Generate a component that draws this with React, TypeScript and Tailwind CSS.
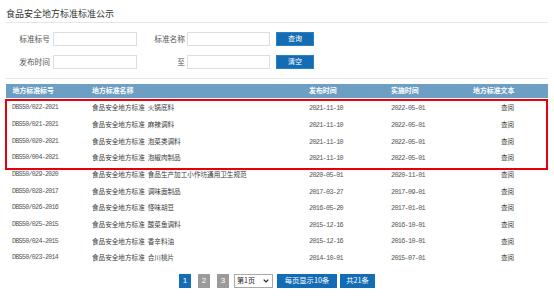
import React, { FC } from "react";

const cjk = "font-['Noto_Sans_CJK_SC',sans-serif]";
const mono = "font-['Liberation_Mono',monospace] tracking-[-0.1em] text-[#555]";

const rows = [
  ["DBS50/022-2021", "火锅底料", "2021-11-10", "2022-05-01"],
  ["DBS50/021-2021", "麻辣调料", "2021-11-10", "2022-05-01"],
  ["DBS50/020-2021", "泡菜类调料", "2021-11-10", "2022-05-01"],
  ["DBS50/004-2021", "泡椒肉制品", "2021-11-10", "2022-05-01"],
  ["DBS50/029-2020", "食品生产加工小作坊通用卫生规范", "2020-05-01", "2020-11-01"],
  ["DBS50/028-2017", "调味面制品", "2017-03-27", "2017-09-01"],
  ["DBS50/026-2016", "怪味胡豆", "2016-05-20", "2017-01-01"],
  ["DBS50/025-2015", "酸菜鱼调料", "2015-12-16", "2016-10-01"],
  ["DBS50/024-2015", "香辛料油", "2015-12-16", "2016-10-01"],
  ["DBS50/023-2014", "合川桃片", "2014-10-01", "2015-07-01"],
];

const Row: FC<{ r: string[] }> = ({ r }) => (
  <div className="flex h-[16.67px] items-center text-[#3a3a3a]">
    <div className={`w-[86px] pl-[6px] text-[6.6px] ${mono}`}>{r[0]}</div>
    <div className={`w-[217px] text-[6.6px] whitespace-nowrap ${cjk}`}>
      食品安全地方标准<span className="ml-[3px]">{r[1]}</span>
    </div>
    <div className={`w-[82px] text-[6.8px] ${mono}`}>{r[2]}</div>
    <div className={`w-[82px] text-[6.8px] ${mono}`}>{r[3]}</div>
    <div className={`flex-1 pl-[28px] text-[6.6px] ${cjk}`}>查阅</div>
  </div>
);

const Field: FC<{ label: string; labelW: string; inputW: string }> = ({ label, labelW, inputW }) => (
  <>
    <div className={`${labelW} text-right text-[7.7px] text-[#555] ${cjk}`}>{label}</div>
    <div className={`${inputW} h-[14.5px] border border-[#dedede] bg-white`} />
  </>
);

export default function App() {
  return (
    <div className={`w-[554px] h-[297px] bg-white px-[6px] ${cjk}`}>
      {/* title */}
      <div className="h-[23px] pt-[8px] text-[9px] leading-[11px] text-[#333] border-b border-[#e6e6e6]">
        食品安全地方标准标准公示
      </div>

      {/* search form */}
      <div className="pt-[8.5px] pb-[8.5px] border-b border-[#e6e6e6] flex flex-col gap-[8.5px]">
        <div className="flex items-center">
          <Field label="标准标号" labelW="w-[44px] mr-[3px]" inputW="w-[84px]" />
          <Field label="标准名称" labelW="w-[48px] mr-[2px]" inputW="w-[83px]" />
          <button className="ml-[6px] w-[38px] h-[14.5px] bg-[#146db4] text-white text-[7px] leading-none border border-[#2c7fc0]">
            查询
          </button>
        </div>
        <div className="flex items-center">
          <Field label="发布时间" labelW="w-[44px] mr-[3px]" inputW="w-[84px]" />
          <Field label="至" labelW="w-[48px] mr-[2px]" inputW="w-[83px]" />
          <button className="ml-[6px] w-[38px] h-[14.5px] bg-[#146db4] text-white text-[7px] leading-none border border-[#2c7fc0]">
            清空
          </button>
        </div>
      </div>

      {/* table header */}
      <div className="mt-[5px] h-[14px] flex items-center bg-[#6d9fc5] text-white font-bold text-[6.9px]">
        <div className="w-[86px] pl-[6.5px]">地方标准标号</div>
        <div className="w-[217px]">地方标准名称</div>
        <div className="w-[82px]">发布时间</div>
        <div className="w-[82px]">实施时间</div>
        <div className="flex-1">地方标准文本</div>
      </div>

      {/* rows */}
      <div className="mt-[2.5px]">
        <div className="relative">
          {rows.slice(0, 4).map((r) => (
            <Row key={r[0]} r={r} />
          ))}
          <div className="absolute -top-[1px] -bottom-[3px] -left-[1px] right-0 border-2 border-solid border-red-600 pointer-events-none" />
        </div>
        {rows.slice(4).map((r) => (
          <Row key={r[0]} r={r} />
        ))}
      </div>

      {/* pagination */}
      <div className="mt-[7px] flex justify-center items-center h-[14px] text-white">
        <div className="w-[12px] h-[14px] bg-[#146db4] flex items-center justify-center text-[8px] font-['Liberation_Sans',sans-serif]">1</div>
        <div className="ml-[7px] w-[12px] h-[14px] bg-[#9b9b9b] flex items-center justify-center text-[8px] font-['Liberation_Sans',sans-serif]">2</div>
        <div className="ml-[7px] w-[12px] h-[14px] bg-[#9b9b9b] flex items-center justify-center text-[8px] font-['Liberation_Sans',sans-serif]">3</div>
        <div className="ml-[5px] w-[39px] h-[14px] border border-[#a9a9a9] bg-white flex items-center justify-between pl-[2px] pr-[3px] text-[#222] text-[7px]">
          <span>第1页</span>
          <svg width="6" height="4" viewBox="0 0 6 4" fill="none">
            <path d="M0.7 0.7 L3 3 L5.3 0.7" stroke="#222" strokeWidth="1.2" />
          </svg>
        </div>
        <div className="ml-[4px] w-[60px] h-[14px] bg-[#146db4] flex items-center justify-center text-[7.3px]">每页显示10条</div>
        <div className="ml-[3px] w-[35px] h-[14px] bg-[#146db4] flex items-center justify-center text-[7.3px]">共21条</div>
      </div>
    </div>
  );
}
